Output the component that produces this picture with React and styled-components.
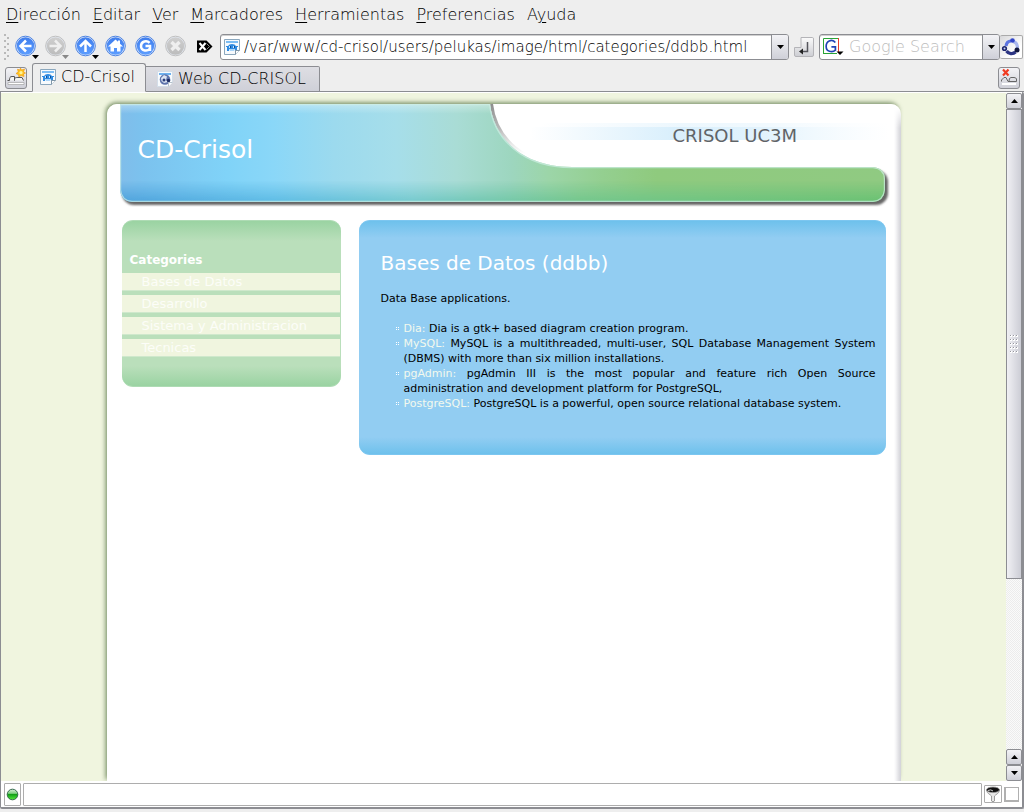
import React from "react";
import styled, { createGlobalStyle, css } from "styled-components";

const UI = `"DejaVu Sans", "Liberation Sans", sans-serif`;
const LINE = "#8c8d92";

const Global = createGlobalStyle`
  *, *::before, *::after { box-sizing: border-box; }
  body { margin: 0; background: #eeeeee; }
  button, input { font: inherit; color: inherit; margin: 0; }
  button { padding: 0; border: 0; background: none; }
  h1, h2, p, ul { margin: 0; padding: 0; font-weight: 400; }
  a { text-decoration: none; }
  svg { display: block; }
`;

const Browser = styled.div`
  display: flex;
  flex-direction: column;
  height: 100vh;
  min-height: 500px;
  padding-bottom: 3px;
  background: #eeeeee;
  color: #000;
  font: 200 16px/20px ${UI};
`;

const MenuBar = styled.nav`
  display: flex;
  gap: 12px;
  height: 30px;
  padding-left: 6px;
`;

const MenuItem = styled.button`
  line-height: 28px;
  u { text-underline-offset: 2px; }
`;

const Toolbar = styled.div`
  display: flex;
  align-items: center;
  height: 33px;
  padding: 0 1px 0 4px;
`;

const Grip = styled.span`
  width: 6px;
  height: 26px;
  margin-right: 4px;
  background-image: radial-gradient(circle at 1px 1px, #b9b9b9 1px, transparent 1px),
    radial-gradient(circle at 4px 4px, #b9b9b9 1px, transparent 1px);
  background-size: 6px 6px;
`;

const ToolButton = styled.button`
  flex: none;
  width: ${(p) => p.$w || 26}px;
  height: 26px;
  margin-right: 4px;
`;

const field = css`
  display: flex;
  align-items: stretch;
  height: 26px;
  border: 1px solid ${LINE};
  border-radius: 3px;
  background: #fff;
  box-shadow: inset 0 1px 0 #d0d0d0;
`;

const AddressField = styled.div`
  ${field}
  flex: 1;
  margin-right: 5px;
  font-size: 15px;
`;

const SearchField = styled.div`
  ${field}
  width: 181px;
`;

const FieldIcon = styled.span`
  display: flex;
  align-items: center;
  padding-left: 3px;
`;

const TextInput = styled.input`
  flex: 1;
  min-width: 0;
  border: 0;
  padding: 0 0 0 4px;
  background: transparent;
  outline: 0;
  &::placeholder { color: #bdbdbd; opacity: 1; }
`;

const raised = css`
  display: flex;
  align-items: center;
  justify-content: center;
  background: linear-gradient(#f3f3f6, #cfd0d8);
`;

const DropButton = styled.button`
  ${raised}
  width: 17px;
  border-left: 1px solid ${LINE};
  border-radius: 0 2px 2px 0;
`;

const SmallButton = styled.button`
  ${raised}
  flex: none;
  width: ${(p) => p.$w || 22}px;
  height: ${(p) => p.$h || 22}px;
  border: 1px solid ${LINE};
  border-radius: 3px;
`;

const GoButton = styled.button`
  flex: none;
  width: 20px;
  height: 20px;
  margin-right: 5px;
`;

const Throbber = styled.span`
  width: 23px;
  height: 24px;
  border: 1px solid #aaa;
  border-left: 0;
  border-radius: 2px;
  background: linear-gradient(135deg, #d8d8da, #fff 70%);
`;

const TabBar = styled.div`
  display: flex;
  align-items: flex-end;
  flex: none;
  height: 29px;
  padding: 0 4px 0 5px;
  box-shadow: inset 0 -1px 0 ${LINE};
`;

const TabTool = styled(SmallButton)`
  align-self: center;
  margin: 0 5px 0 0;
`;

const CloseTool = styled(TabTool)`
  margin: 0 0 0 auto;
`;

const Tab = styled.button`
  display: flex;
  align-items: center;
  gap: 5px;
  height: ${(p) => (p.$active ? 29 : 26)}px;
  padding: ${(p) => (p.$active ? "0 10px 2px 7px" : "0 13px 1px 11px")};
  border: 1px solid ${LINE};
  border-bottom-color: ${(p) => (p.$active ? "#eeeeee" : LINE)};
  border-left-width: ${(p) => (p.$active ? 1 : 0)}px;
  border-radius: ${(p) => (p.$active ? "3px 3px 0 0" : "0 2px 0 0")};
  background: ${(p) => (p.$active ? "#eeeeee" : "linear-gradient(#dedee3, #cfd0d8)")};
`;

const Pane = styled.div`
  display: flex;
  flex-direction: column;
  flex: 1;
  min-height: 0;
  border: 1px solid ${LINE};
  border-width: 0 2px 2px 1px;
  border-radius: 0 2px 2px 2px;
  background: #fff;
`;

const Viewport = styled.div`
  display: flex;
  flex: 1;
  min-height: 0;
  padding-top: 1px;
`;

const Page = styled.main`
  flex: 1;
  min-width: 0;
  overflow: hidden;
  padding-top: 11px;
  background: #f0f5df;
  font: 400 11px/15px Verdana, ${UI};
`;

const Sheet = styled.div`
  width: calc(100% - 16px);
  max-width: 794px;
  min-height: 100%;
  margin: 0 auto;
  padding: 0 15px 20px 13px;
  border-radius: 10px 10px 0 0;
  background: linear-gradient(#fff 4px, transparent) top / 100% 24px no-repeat,
    linear-gradient(to left, #d2d2d8, #dedee2 2px, #f4f4f6 5px, #fff 7px);
  box-shadow: -3px 0 4px -1px rgba(84, 112, 66, 0.45),
    -1px -3px 4px -1px rgba(84, 112, 66, 0.6);
`;

const Masthead = styled.header`
  display: grid;
  grid-template: auto / 530px 1fr;
`;

const Banner = styled.svg`
  grid-area: 1 / 1 / 2 / 3;
  width: 100%;
  height: 104px;
`;

const SiteTitle = styled.h1`
  grid-area: 1 / 1;
  padding: 30px 0 0 18px;
  color: #fff;
  font-size: 25px;
  line-height: 32px;
`;

const Owner = styled.p`
  grid-area: 1 / 2;
  padding: 22px 0 0 23px;
  color: #5f6468;
  font-size: 18px;
  line-height: 20px;
`;

const Columns = styled.div`
  display: flex;
  align-items: flex-start;
  gap: 18px;
  padding: 12px 0 0 2px;
`;

const Sidebar = styled.nav`
  flex: none;
  width: 219px;
  padding: 31px 1px 29px 0;
  border: 1px solid #aedbb4;
  border-width: 1px 0;
  border-radius: 11px;
  background: linear-gradient(#9ad3a2, #badfbb 20px, #badfbb calc(100% - 20px), #9ad3a2);
`;

const SideTitle = styled.h2`
  padding: 0 8px 5px;
  color: #fff;
  font-size: 12px;
  font-weight: 700;
  line-height: 16px;
`;

const SideList = styled.ul`
  display: grid;
  gap: 4px;
  list-style: none;
`;

const SideLink = styled.a`
  display: block;
  height: 18px;
  padding-left: 20px;
  border-bottom: 1px solid #cfe8cc;
  background: #f0f5df;
  color: #fcfdf8;
  font-size: 13px;
  line-height: 17px;
`;

const Article = styled.article`
  flex: 1;
  padding: 29px 10px 43px 22px;
  border: 1px solid #7cc6f0;
  border-width: 1px 0;
  border-radius: 11px;
  background: linear-gradient(#6ec1ec, #92cdf2 17px, #92cdf2 calc(100% - 17px), #6ec1ec);
`;

const ArticleTitle = styled.h2`
  padding-bottom: 15px;
  color: #fff;
  font-size: 20px;
  line-height: 26px;
`;

const AppList = styled.ul`
  padding: 15px 0 0 23px;
  list-style: none;
  text-align: justify;
`;

const AppItem = styled.li`
  position: relative;
  &::before {
    content: "";
    position: absolute;
    left: -8px;
    top: 6px;
    width: 1px;
    height: 1px;
    background: #fff;
    box-shadow: 2px 0 #fff, 0 2px #fff, 2px 2px #fff;
  }
`;

const AppLink = styled.a`
  color: #f2f9ee;
`;

const Scrollbar = styled.div`
  display: flex;
  flex-direction: column;
  flex: none;
  width: 16px;
  background: repeating-conic-gradient(#ececec 0 25%, #fafafa 0 50%) 0 0 / 2px 2px;
`;

const ScrollButton = styled.button`
  ${raised}
  flex: none;
  height: 16px;
  border: 1px solid ${LINE};
  border-radius: 2px;
`;

const ScrollTrack = styled.div`
  flex: 1;
  min-height: 0;
`;

const ScrollThumb = styled.div`
  display: flex;
  align-items: center;
  justify-content: center;
  border: 1px solid ${LINE};
  background: linear-gradient(to right, #f0f0f4, #cccdd5);
`;

const StatusBar = styled.footer`
  display: flex;
  align-items: center;
  flex: none;
  gap: 2px;
  height: 26px;
  padding: 0 3px;
`;

const StatusBox = styled.div`
  display: flex;
  align-items: center;
  justify-content: center;
  width: ${(p) => p.$w}px;
  height: ${(p) => p.$h || 23}px;
  border: 1px solid #adadad;
  border-radius: 1px;
`;

const StatusText = styled(StatusBox)`
  flex: 1;
  width: auto;
`;

const StatusCheck = styled.input`
  appearance: none;
  width: 15px;
  height: 15px;
  border: 2px solid #b0b0b0;
  border-width: 1px 1px 2px 2px;
  background: #fff;
`;

const Arrow = ({ up }) => (
  <svg width="7" height="4" viewBox="0 0 7 4" aria-hidden="true">
    <path d={up ? "M0 4 L3.5 0 L7 4Z" : "M0 0 L3.5 4 L7 0Z"} />
  </svg>
);

const orbGlyphs = {
  back: <path d="M17.5 11.5H7M12 6L6.5 11.5L12 17" />,
  forward: <path d="M5.5 11.5H16M11 6L16.5 11.5L11 17" />,
  up: <path d="M11.5 17.5V7M6 12L11.5 6.5L17 12" />,
  home: <path d="M4 12L11.5 5L14 7.3V6H16V9.2L19 12H16.5V17H13V13.5H10V17H6.5V12Z" fill="#fff" stroke="none" />,
  reload: <path d="M15.6 8.4C13 5.6 7 6.4 7 11.5C7 16.8 13.8 17.3 16 14V11.5H11.5M16 11V16.5" />,
  stop: <path d="M7.5 7.5L15.5 15.5M15.5 7.5L7.5 15.5" />,
};

const Orb = ({ kind, grey, menu }) => (
  <svg width="26" height="26" viewBox="0 0 26 26" aria-hidden="true">
    <defs>
      <linearGradient id={`orb-${kind}`} x1="0" y1="0" x2="0" y2="1">
        <stop offset="0" stopColor={grey ? "#cfcfcf" : "#3f7ded"} />
        <stop offset="1" stopColor={grey ? "#bcbcbc" : "#5c9dff"} />
      </linearGradient>
    </defs>
    <circle cx="11.5" cy="12" r="9.8" fill="#e4e9f2" stroke={grey ? "#bfbfbf" : "#4a82e4"} />
    <circle cx="11.5" cy="12" r="8.7" fill={`url(#orb-${kind})`} />
    <g transform="translate(0 .5)" fill="none" stroke={grey ? "#efefef" : "#fff"} strokeWidth={kind === "stop" ? 3.4 : 2.5}>
      {orbGlyphs[kind]}
    </g>
    {menu && <path d="M18 21H25L21.5 25Z" fill={grey ? "#888" : "#000"} />}
  </svg>
);

const PageIcon = ({ dark }) => (
  <svg width="16" height="16" viewBox="0 0 16 16" aria-hidden="true">
    <path d="M.5 .5H15.5V11.5L11.5 15.5H.5Z" fill="#f7fafd" stroke={dark ? "#d3dde8" : "#8ba7bd"} />
    <path d="M2 2H14V4H2Z" fill={dark ? "#6db1ef" : "#7dbdf3"} />
    {dark ? (
      <>
        <circle cx="8" cy="8.5" r="5.3" fill="#5f74ac" />
        <path d="M4 7L7 4L10 5.5L9 9L11 11L7 12L4.5 10Z" fill="#dbe4f2" />
        <circle cx="7" cy="9" r="1.5" fill="#2b3f7c" />
        <circle cx="11.5" cy="9.5" r="1.7" fill="#1d2c62" />
      </>
    ) : (
      <>
        <path d="M2 7H4Q5 5 8 5Q11 5 12 7H14V8H13V12H11V10H5V12H3V8H2Z" fill="#2f8be2" />
        <path d="M5 10H11L10 12H6Z" fill="#a9d5fa" />
        <path d="M5 7H7V9H5ZM9 7H11V9H9Z" fill="#c9e4fb" />
        <path d="M6 7H7V9H6ZM10 7H11V9H10Z" fill="#124f96" />
      </>
    )}
    <path d="M11.5 15.5V11.5H15.5" fill="#fff" stroke={dark ? "#b5c1cc" : "#8296a6"} />
  </svg>
);

const ClearIcon = () => (
  <svg width="22" height="26" viewBox="0 0 22 26" aria-hidden="true">
    <path d="M3 6.5H12.5L18.5 12.5L12.5 18.5H3Z" />
    <path d="M5.5 9L11.5 16M11.5 9L5.5 16" stroke="#fff" strokeWidth="2" />
    <path d="M12.5 9.5L15.5 12.5L12.5 15.5" stroke="#888" fill="none" />
  </svg>
);

const GoIcon = () => (
  <svg width="20" height="20" viewBox="0 0 20 20" aria-hidden="true">
    <defs>
      <linearGradient id="key" x1="0" y1="0" x2="0" y2="1">
        <stop offset="0" stopColor="#fbfbfb" />
        <stop offset="1" stopColor="#cdced3" />
      </linearGradient>
    </defs>
    <path d="M7 .5H18.5Q19.5 .5 19.5 2V18Q19.5 19.5 18 19.5H2Q.5 19.5 .5 18V10.5H7Z" fill="url(#key)" stroke="#b4b4b8" />
    <path d="M13.5 5V14.5H7" fill="none" stroke="#55565c" strokeWidth="1.5" />
    <path d="M5 14.5L9 11.5V17.5Z" fill="#222" />
  </svg>
);

const GoogleIcon = () => (
  <svg width="22" height="20" viewBox="0 0 22 20" aria-hidden="true">
    <path d="M.5 17V1.5H15" fill="none" stroke="#2aa336" />
    <path d="M15.5 1V15" stroke="#e8402c" />
    <path d="M0 16.5H14" stroke="#2aa336" />
    <path d="M12.3 5.6C10.8 3.4 8.2 3.1 6.2 4C2 6 2.2 13 6.4 14.2C8.6 14.9 11 14.4 12.4 13.2V9.8H8.4" fill="none" stroke="#2143b5" strokeWidth="1.7" />
    <path d="M13.5 14.5H20.5L17 18Z" />
  </svg>
);

const ThrobberIcon = () => (
  <svg width="22" height="22" viewBox="0 0 22 22" aria-hidden="true">
    <g fill="none" strokeWidth="3.2">
      <path d="M6 10C6.5 7 8.5 5 11 5" stroke="#5d74e0" />
      <path d="M13.5 5.5C17 7 18 10 17 13" stroke="#a8b6ee" />
      <path d="M15.5 16C13 18.5 8.5 18 6.5 15" stroke="#2c3584" />
    </g>
    <circle cx="12.5" cy="4.5" r="2.3" fill="#3044c8" />
    <circle cx="17" cy="14" r="2.5" fill="#0f153c" />
    <circle cx="4.5" cy="12.5" r="2.6" fill="#1c256c" />
    <circle cx="4.5" cy="12.5" r="1" fill="#c8d1f6" />
  </svg>
);

const NewTabIcon = () => (
  <svg width="20" height="20" viewBox="0 0 20 20" aria-hidden="true">
    <path d="M2 14.5H18V16.5H2Z" fill="#fff" stroke="#999" strokeWidth=".6" />
    <path d="M1.5 12.5H3.5C3.5 9.5 4 8.5 6 8.5H8.5V12.5M8.5 12.5C8.5 9.5 9.5 9.5 12 9.5H16L17.5 12.5" fill="#f4f4f4" stroke="#555" />
    <path d="M14.5 0L15.5 2L18.5 1L17.5 4L19.5 5L17.5 6L18 8.5L15 7.5L13 9L12.3 6.5L10 5.5L12.3 4L11.5 1.2L13.8 2Z" fill="#ffc51f" stroke="#f09c16" strokeWidth=".7" />
    <circle cx="15" cy="4.7" r="1.6" fill="#fff39a" />
  </svg>
);

const CloseTabIcon = () => (
  <svg width="20" height="20" viewBox="0 0 20 20" aria-hidden="true">
    <path d="M3 16H17" stroke="#fff" strokeWidth="2" />
    <path d="M2.5 13.5V12L5 9.5H7L9 13.5H17.5V11Q17 9.5 15 9.5H12Q10 9.5 10 13" fill="none" stroke="#666" />
    <path d="M4 1.5L9.5 7.5M9.5 1.5L4 7.5" stroke="#f03a20" strokeWidth="2.2" />
  </svg>
);

const Led = () => (
  <svg width="13" height="13" viewBox="0 0 13 13" aria-hidden="true">
    <defs>
      <linearGradient id="led" x1="0" y1="0" x2="0" y2="1">
        <stop offset="0" stopColor="#d8efda" />
        <stop offset=".4" stopColor="#7fce80" />
        <stop offset=".45" stopColor="#0c9a13" />
        <stop offset="1" stopColor="#55ea3c" />
      </linearGradient>
    </defs>
    <circle cx="6.5" cy="6.5" r="5.3" fill="url(#led)" stroke="#356a4c" />
  </svg>
);

const FunnelIcon = () => (
  <svg width="16" height="17" viewBox="0 0 16 17" aria-hidden="true">
    <path d="M1.5 4C2 8 5 8 6.5 10V15Q8 16.5 9.5 15V10C11 8 14 8 14.5 4Z" fill="#e8e8e8" stroke="#888" strokeWidth=".8" />
    <ellipse cx="8" cy="3.8" rx="6.5" ry="2.8" fill="#111" stroke="#999" strokeWidth=".8" />
    <path d="M3 4.5Q6 3 8 5" fill="none" stroke="#ccc" />
  </svg>
);

const ThumbGrip = () => (
  <svg width="10" height="20" viewBox="0 0 10 20" aria-hidden="true">
    {[1, 5, 9, 13, 17].map((y) =>
      [1, 4, 7].map((x) => (
        <g key={`${x}-${y}`}>
          <path d={`M${x} ${y}h2v2h-2z`} fill="#fff" />
          <path d={`M${x} ${y}h1v1h-1z`} fill="#96979e" />
        </g>
      ))
    )}
  </svg>
);

const wave =
  "M0 0H370C374 34 402 63 452 63H753Q765 64 765 75V86Q764 97 753 98H12Q1 97 0 86Z";

const BannerArt = () => (
  <Banner viewBox="0 0 766 104" preserveAspectRatio="none" overflow="visible" aria-hidden="true">
    <defs>
      <linearGradient id="base" gradientUnits="userSpaceOnUse" x1="0" y1="0" x2="766" y2="0">
        <stop offset="0" stopColor="#80bdea" />
        <stop offset=".03" stopColor="#7bc2ee" />
        <stop offset=".14" stopColor="#80d3f8" />
        <stop offset=".2" stopColor="#8ad7f8" />
        <stop offset=".28" stopColor="#9cdaee" />
        <stop offset=".36" stopColor="#a6deea" />
        <stop offset=".44" stopColor="#a9dcd5" />
        <stop offset=".51" stopColor="#9dd6bf" />
        <stop offset=".56" stopColor="#9cd5a8" />
        <stop offset=".63" stopColor="#94cf90" />
        <stop offset=".7" stopColor="#8fca7e" />
        <stop offset="1" stopColor="#90ca82" />
      </linearGradient>
      <linearGradient id="tint" gradientUnits="userSpaceOnUse" x1="0" y1="0" x2="766" y2="0">
        <stop offset="0" stopColor="#4ea2dc" />
        <stop offset=".2" stopColor="#5dbbe4" />
        <stop offset=".38" stopColor="#74c9cd" />
        <stop offset=".6" stopColor="#72c68c" />
        <stop offset="1" stopColor="#68c172" />
      </linearGradient>
      <linearGradient id="fade" x1="0" y1="0" x2="0" y2="1">
        <stop offset="0" stopColor="#000" />
        <stop offset=".78" stopColor="#000" />
        <stop offset="1" stopColor="#fff" />
      </linearGradient>
      <linearGradient id="gloss" x1="0" y1="0" x2="0" y2="1">
        <stop offset="0" stopColor="#fff" stopOpacity=".35" />
        <stop offset=".1" stopColor="#fff" stopOpacity="0" />
      </linearGradient>
      <linearGradient id="rim" gradientUnits="userSpaceOnUse" x1="0" y1="0" x2="0" y2="50">
        <stop offset="0" stopColor="#8d8d8d" />
        <stop offset=".5" stopColor="#a8a8a8" stopOpacity=".8" />
        <stop offset="1" stopColor="#c0c0c0" stopOpacity="0" />
      </linearGradient>
      <linearGradient id="glow" x1="0" y1="0" x2="1" y2="0">
        <stop offset="0" stopColor="#d9effc" stopOpacity="0" />
        <stop offset=".4" stopColor="#d9effc" />
        <stop offset=".65" stopColor="#e2f3fd" />
        <stop offset="1" stopColor="#eef8fe" stopOpacity="0" />
      </linearGradient>
      <mask id="lower"><rect width="766" height="98" fill="url(#fade)" /></mask>
      <clipPath id="inside"><path d={wave} /></clipPath>
      <filter id="soft" x="-5%" y="-20%" width="110%" height="140%">
        <feGaussianBlur stdDeviation="1" />
      </filter>
    </defs>
    <rect x="420" y="19" width="350" height="4" fill="url(#glow)" opacity=".5" />
    <rect x="410" y="23" width="360" height="13" fill="url(#glow)" />
    <rect x="2" y="66" width="766" height="35" rx="12" fill="#666" filter="url(#soft)" />
    <path d="M371.5 0C375.5 33 403 62 452 63" fill="none" stroke="url(#rim)" strokeWidth="3" />
    <path d={wave} fill="url(#base)" />
    <path d={wave} fill="url(#tint)" mask="url(#lower)" />
    <path d={wave} fill="url(#gloss)" />
    <path d={wave} fill="none" stroke="#cdeee4" strokeOpacity=".7" strokeWidth="2.4" clipPath="url(#inside)" />
  </Banner>
);

const menus = [
  ["", "D", "irección"],
  ["", "E", "ditar"],
  ["", "V", "er"],
  ["", "M", "arcadores"],
  ["", "H", "erramientas"],
  ["", "P", "referencias"],
  ["A", "y", "uda"],
];

const categories = ["Bases de Datos", "Desarrollo", "Sistema y Administracion", "Tecnicas"];

const apps = [
  ["Dia:", "Dia is a gtk+ based diagram creation program."],
  ["MySQL:", "MySQL is a multithreaded, multi-user, SQL Database Management System (DBMS) with more than six million installations."],
  ["pgAdmin:", "pgAdmin III is the most popular and feature rich Open Source administration and development platform for PostgreSQL,"],
  ["PostgreSQL:", "PostgreSQL is a powerful, open source relational database system."],
];

export default function App() {
  return (
    <>
      <Global />
      <Browser>
        <MenuBar aria-label="Menú">
          {menus.map(([before, key, after]) => (
            <MenuItem key={key}>{before}<u>{key}</u>{after}</MenuItem>
          ))}
        </MenuBar>
        <Toolbar>
          <Grip />
          <ToolButton aria-label="Atrás"><Orb kind="back" menu /></ToolButton>
          <ToolButton aria-label="Adelante"><Orb kind="forward" grey menu /></ToolButton>
          <ToolButton aria-label="Arriba"><Orb kind="up" menu /></ToolButton>
          <ToolButton aria-label="Inicio"><Orb kind="home" /></ToolButton>
          <ToolButton aria-label="Recargar"><Orb kind="reload" /></ToolButton>
          <ToolButton aria-label="Detener"><Orb kind="stop" grey /></ToolButton>
          <ToolButton $w={22} aria-label="Borrar dirección"><ClearIcon /></ToolButton>
          <AddressField>
            <FieldIcon><PageIcon /></FieldIcon>
            <TextInput aria-label="Dirección" defaultValue="/var/www/cd-crisol/users/pelukas/image/html/categories/ddbb.html" />
            <DropButton aria-label="Historial"><Arrow /></DropButton>
          </AddressField>
          <GoButton aria-label="Ir"><GoIcon /></GoButton>
          <SearchField>
            <FieldIcon><GoogleIcon /></FieldIcon>
            <TextInput aria-label="Buscar" placeholder="Google Search" />
            <DropButton aria-label="Buscadores"><Arrow /></DropButton>
          </SearchField>
          <Throbber><ThrobberIcon /></Throbber>
        </Toolbar>
        <TabBar>
          <TabTool aria-label="Nueva pestaña"><NewTabIcon /></TabTool>
          <Tab $active><PageIcon />CD-Crisol</Tab>
          <Tab><PageIcon dark />Web CD-CRISOL</Tab>
          <CloseTool aria-label="Cerrar pestaña"><CloseTabIcon /></CloseTool>
        </TabBar>
        <Pane>
          <Viewport>
            <Page>
              <Sheet>
                <Masthead>
                  <BannerArt />
                  <SiteTitle>CD-Crisol</SiteTitle>
                  <Owner>CRISOL UC3M</Owner>
                </Masthead>
                <Columns>
                  <Sidebar>
                    <SideTitle>Categories</SideTitle>
                    <SideList>
                      {categories.map((name) => (
                        <li key={name}><SideLink href="#">{name}</SideLink></li>
                      ))}
                    </SideList>
                  </Sidebar>
                  <Article>
                    <ArticleTitle>Bases de Datos (ddbb)</ArticleTitle>
                    <p>Data Base applications.</p>
                    <AppList>
                      {apps.map(([name, text]) => (
                        <AppItem key={name}><AppLink href="#">{name}</AppLink> {text}</AppItem>
                      ))}
                    </AppList>
                  </Article>
                </Columns>
              </Sheet>
            </Page>
            <Scrollbar>
              <ScrollButton aria-label="Subir"><Arrow up /></ScrollButton>
              <ScrollTrack><ScrollThumb style={{ height: "73.4%" }}><ThumbGrip /></ScrollThumb></ScrollTrack>
              <ScrollButton aria-label="Subir"><Arrow up /></ScrollButton>
              <ScrollButton aria-label="Bajar"><Arrow /></ScrollButton>
            </Scrollbar>
          </Viewport>
          <StatusBar>
            <StatusBox $w={17}><Led /></StatusBox>
            <StatusText />
            <StatusBox $w={18} $h={18}><FunnelIcon /></StatusBox>
            <StatusCheck type="checkbox" aria-label="Enlazar vista" />
          </StatusBar>
        </Pane>
      </Browser>
    </>
  );
}
